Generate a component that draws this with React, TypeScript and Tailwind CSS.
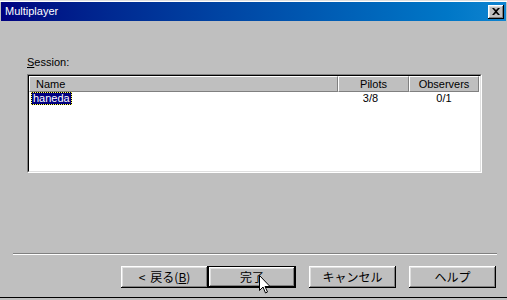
import React from "react";

const raised =
  "shadow-[inset_-1px_-1px_#000,inset_1px_1px_#fff,inset_-2px_-2px_#808080,inset_2px_2px_#dfdfdf]";

function Btn({ children, def }: { children: React.ReactNode; def?: boolean }) {
  if (def) {
    return (
      <div className="w-[88px] h-[22px] border border-black bg-[#bfbfbf]">
        <div className={`w-full h-full flex items-center justify-center ${raised}`}>{children}</div>
      </div>
    );
  }
  return (
    <div className={`w-[87px] h-[22px] flex items-center justify-center bg-[#bfbfbf] ${raised}`}>
      {children}
    </div>
  );
}

export default function App() {
  const ui = { fontFamily: '"Liberation Sans", Arial, sans-serif' };
  const jp = { fontFamily: '"Noto Sans CJK JP", "Liberation Sans", sans-serif' };
  return (
    <div
      className="relative w-[507px] h-[300px] overflow-hidden bg-[#bfbfbf] flex flex-col text-black"
      style={ui}
    >
      <div className="h-[1px] bg-[#dfdfdf]" />
      <div className="h-[1px] bg-white" />
      {/* title bar */}
      <div className="mx-[1px] h-[19px] bg-linear-to-r from-[#000080] to-[#1084d0] flex items-center justify-between pl-[4px] pr-[2px]">
        <span className="text-white text-[11px] leading-[13px]">Multiplayer</span>
        <div className={`w-[16px] h-[14px] bg-[#bfbfbf] flex items-center justify-center ${raised}`}>
          <svg width="8" height="7" viewBox="0 0 8 7">
            <path d="M0 0h2l2 2 2-2h2L5 3.5 8 7H6L4 5 2 7H0l3-3.5z" fill="#000" />
          </svg>
        </div>
      </div>

      {/* Session label */}
      <div className="mt-[35px] ml-[27px] h-[13px] text-[11px] leading-[13px]">
        <span className="underline">S</span>ession:
      </div>

      {/* list box */}
      <div className="mt-[5px] ml-[27px] w-[455px] h-[99px] border-t border-l border-[#808080] border-b border-r border-b-white border-r-white">
        <div className="w-full h-full border-t border-l border-black border-b border-r border-b-[#dfdfdf] border-r-[#dfdfdf] bg-white flex flex-col">
          <div className="flex h-[16px] text-[11px] leading-[14px]">
            <div className="w-[309px] bg-[#bfbfbf] border-t border-l border-white border-b border-r border-b-[#808080] border-r-[#808080] pl-[6px]">
              Name
            </div>
            <div className="w-[71px] bg-[#bfbfbf] border-t border-l border-white border-b border-r border-b-[#808080] border-r-[#808080] text-center">
              Pilots
            </div>
            <div className="w-[70px] bg-[#bfbfbf] border-t border-l border-white border-b border-r border-b-[#808080] border-r-[#808080] text-center">
              Observers
            </div>
          </div>
          <div className="flex h-[13px] text-[11px] leading-[11px]">
            <div className="w-[309px] pl-[2px]">
              <span className="inline-block h-[13px] bg-black border border-dotted border-[#ffff60]">
                <span className="block h-full bg-[#000080] text-white px-[1px]">haneda</span>
              </span>
            </div>
            <div className="w-[71px] pt-[1px] text-center pr-[6px]">3/8</div>
            <div className="w-[70px] pt-[1px] text-center">0/1</div>
          </div>
        </div>
      </div>

      {/* separator */}
      <div className="mt-[80px] ml-[13px] w-[484px]">
        <div className="h-[1px] bg-[#808080]" />
        <div className="h-[1px] bg-white" />
      </div>

      {/* buttons */}
      <div className="mt-[11px] flex h-[22px] text-[12px] leading-[14px]" style={jp}>
        <div className="ml-[121px]">
          <Btn>
            <span className="flex gap-[5px]">
              <span>&lt;</span>
              <span>戻る(<span className="underline">B</span>)</span>
            </span>
          </Btn>
        </div>
        <div>
          <Btn def>完了</Btn>
        </div>
        <div className="ml-[13px]">
          <Btn>キャンセル</Btn>
        </div>
        <div className="ml-[13px]">
          <Btn>ヘルプ</Btn>
        </div>
      </div>

      <div className="mt-[9px] h-[1px] bg-black" />

      {/* cursor */}
      <svg
        className="absolute left-[259px] top-[275px]"
        width="13"
        height="20"
        viewBox="0 0 13 20"
      >
        <path
          d="M0.5 0.5v15l3.5-3.5 2.5 6 2-1-2.5-5.5h5z"
          fill="#fff"
          stroke="#000"
          strokeWidth="1"
        />
      </svg>
    </div>
  );
}
